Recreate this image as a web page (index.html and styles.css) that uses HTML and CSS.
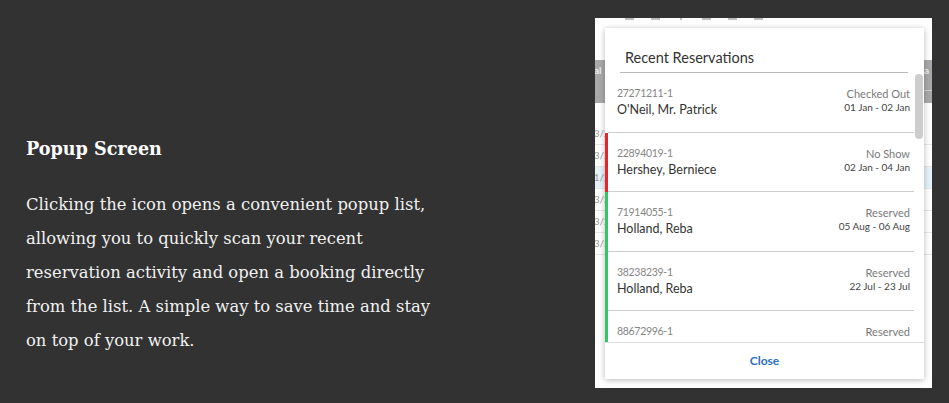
FILE: index.html
```html
<!DOCTYPE html>
<html lang="en">
<head>
<meta charset="utf-8">
<title>Popup Screen</title>
<link rel="stylesheet" href="styles.css">
</head>
<body>
<div class="page">
  <section class="copy">
    <h2 class="copy-title">Popup Screen</h2>
    <p class="copy-text">Clicking the icon opens a convenient popup list, allowing you to quickly scan your recent reservation activity and open a booking directly from the list. A simple way to save time and stay on top of your work.</p>
  </section>

  <div class="shot">
    <div class="bg-icons"><span></span><span></span><span class="tiny"></span><span></span><span></span><span></span></div>
    <div class="bg-head"><span>al</span><span class="bg-box">la</span></div>
    <div class="bg-rows">
      <div class="bg-row">03/2</div>
      <div class="bg-row">03/2</div>
      <div class="bg-row bg-row--sel">01/2</div>
      <div class="bg-row">03/2</div>
      <div class="bg-row">03/2</div>
      <div class="bg-row">03/2</div>
    </div>

    <div class="popup">
      <div class="popup-title">Recent Reservations</div>
      <div class="popup-body">
        <div class="list">
          <div class="row">
            <div class="row-inner">
              <div class="row-left"><div class="res-id">27271211-1</div><div class="res-name">O'Neil, Mr. Patrick</div></div>
              <div class="row-right"><div class="res-status">Checked Out</div><div class="res-dates">01 Jan - 02 Jan</div></div>
            </div>
          </div>
          <div class="row row--red">
            <div class="row-inner">
              <div class="row-left"><div class="res-id">22894019-1</div><div class="res-name">Hershey, Berniece</div></div>
              <div class="row-right"><div class="res-status">No Show</div><div class="res-dates">02 Jan - 04 Jan</div></div>
            </div>
          </div>
          <div class="row row--green">
            <div class="row-inner">
              <div class="row-left"><div class="res-id">71914055-1</div><div class="res-name">Holland, Reba</div></div>
              <div class="row-right"><div class="res-status">Reserved</div><div class="res-dates">05 Aug - 06 Aug</div></div>
            </div>
          </div>
          <div class="row row--green">
            <div class="row-inner">
              <div class="row-left"><div class="res-id">38238239-1</div><div class="res-name">Holland, Reba</div></div>
              <div class="row-right"><div class="res-status">Reserved</div><div class="res-dates">22 Jul - 23 Jul</div></div>
            </div>
          </div>
          <div class="row row--green">
            <div class="row-inner">
              <div class="row-left"><div class="res-id">88672996-1</div></div>
              <div class="row-right"><div class="res-status">Reserved</div></div>
            </div>
          </div>
        </div>
        <div class="scroll"><div class="thumb"></div></div>
      </div>
      <div class="popup-foot">Close</div>
    </div>
  </div>
</div>
</body>
</html>
```

FILE: styles.css
```css
html, body {
  margin: 0;
  padding: 0;
}
body {
  background: #323232;
  width: 949px;
  height: 403px;
  overflow: hidden;
}
.page {
  display: flex;
  height: 403px;
}

/* left copy */
.copy {
  width: 595px;
  box-sizing: border-box;
  padding: 137px 0 0 26px;
}
.copy-title {
  margin: 0;
  font-family: "DejaVu Serif", serif;
  font-weight: bold;
  font-size: 17.6px;
  line-height: 24px;
  color: #ffffff;
}
.copy-text {
  margin: 27px 0 0;
  width: 412px;
  font-family: "DejaVu Serif", serif;
  font-size: 16.4px;
  line-height: 34px;
  color: #f1f1f1;
}

/* screenshot mockup */
.shot {
  position: relative;
  width: 337px;
  height: 370px;
  margin-top: 18px;
  background: #ffffff;
  overflow: hidden;
  font-family: Lato, sans-serif;
}
.bg-icons {
  display: flex;
  gap: 17px;
  padding-left: 30px;
  height: 2px;
}
.bg-icons span {
  width: 9px;
  height: 2px;
  background: #bdbdbd;
}
.bg-icons .tiny {
  width: 2px;
  margin: 0 3px;
}
.bg-head {
  margin-top: 40px;
  height: 43px;
  box-sizing: border-box;
  background: #a9a9a9;
  display: flex;
  justify-content: space-between;
  align-items: flex-start;
  padding: 4px 0 0;
  font-size: 10px;
  font-weight: bold;
  color: #f0f0f0;
}
.bg-head span:first-child {
  margin-left: -1px;
}
.bg-box {
  margin-right: -4px;
  padding: 0 6px 14px 2px;
  border: 1px solid #d0d0d0;
  border-top: 0;
}
.bg-rows {
  padding-top: 20px;
}
.bg-row {
  height: 21px;
  line-height: 21px;
  border-bottom: 1px solid #e6e6e6;
  font-size: 10px;
  color: #9a9a9a;
  text-indent: -7px;
}
.bg-row--sel {
  background: #e5f2f8;
}

/* popup */
.popup {
  position: absolute;
  left: 10px;
  top: 10px;
  width: 319px;
  height: 351px;
  background: #ffffff;
  box-shadow: 0 1px 6px rgba(0, 0, 0, 0.28);
  display: flex;
  flex-direction: column;
}
.popup-title {
  margin: 0 16px 0 15px;
  padding: 20px 0 4px 5px;
  line-height: 20px;
  font-size: 14.5px;
  color: #333333;
  border-bottom: 1px solid #b8b8b8;
}
.popup-body {
  display: flex;
  height: 269px;
  overflow: hidden;
}
.list {
  flex: 1;
}
.row {
  border-left: 3px solid #ffffff;
}
.row--red {
  border-left-color: #e3262b;
}
.row--green {
  border-left-color: #33c46c;
}
.row-inner {
  height: 59.6px;
  box-sizing: border-box;
  border-bottom: 1px solid #cccccc;
  padding: 14px 4px 0 9px;
  display: flex;
  justify-content: space-between;
}
.res-id {
  font-size: 10.5px;
  line-height: 13px;
  color: #858585;
  letter-spacing: -0.3px;
}
.res-name {
  margin-top: 3px;
  font-size: 12.5px;
  line-height: 13px;
  color: #333333;
}
.row-right {
  text-align: right;
}
.res-status {
  font-size: 11px;
  line-height: 13px;
  color: #7a7a7a;
}
.res-dates {
  margin-top: 1px;
  font-size: 10px;
  line-height: 12px;
  color: #444444;
}
.scroll {
  width: 10px;
}
.thumb {
  margin: 1px 0 0 1px;
  width: 8px;
  height: 65px;
  border-radius: 4px;
  background: #cdcdcd;
}
.popup-foot {
  border-top: 1px solid #dcdcdc;
  height: 35px;
  line-height: 35px;
  text-align: center;
  font-size: 12px;
  font-weight: bold;
  color: #2f6fbf;
}
```
